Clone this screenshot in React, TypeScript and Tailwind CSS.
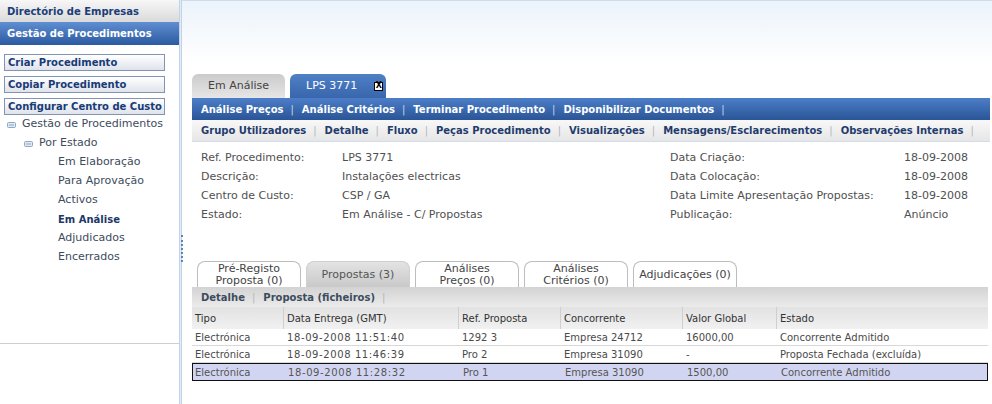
import React from 'react'

const FONT = "font-['DejaVu_Sans',sans-serif]"

const topLinks = ['Análise Preços', 'Análise Critérios', 'Terminar Procedimento', 'Disponibilizar Documentos']
const subLinks = [
  'Grupo Utilizadores',
  'Detalhe',
  'Fluxo',
  'Peças Procedimento',
  'Visualizações',
  'Mensagens/Esclarecimentos',
  'Observações Internas',
]
const estados = ['Em Elaboração', 'Para Aprovação', 'Activos', 'Em Análise', 'Adjudicados', 'Encerrados']

const leftInfo = [
  ['Ref. Procedimento:', 'LPS 3771'],
  ['Descrição:', 'Instalações electricas'],
  ['Centro de Custo:', 'CSP / GA'],
  ['Estado:', 'Em Análise - C/ Propostas'],
]
const rightInfo = [
  ['Data Criação:', '18-09-2008'],
  ['Data Colocação:', '18-09-2008'],
  ['Data Limite Apresentação Propostas:', '18-09-2008'],
  ['Publicação:', 'Anúncio'],
]

const subTabs = [
  { lines: ['Pré-Registo', 'Proposta (0)'] },
  { lines: ['Propostas (3)'], active: true },
  { lines: ['Análises', 'Preços (0)'] },
  { lines: ['Análises', 'Critérios (0)'] },
  { lines: ['Adjudicações (0)'] },
]

const headers = ['Tipo', 'Data Entrega (GMT)', 'Ref. Proposta', 'Concorrente', 'Valor Global', 'Estado']
const rows = [
  ['Electrónica', '18-09-2008 11:51:40', '1292 3', 'Empresa 24712', '16000,00', 'Concorrente Admitido'],
  ['Electrónica', '18-09-2008 11:46:39', 'Pro 2', 'Empresa 31090', '-', 'Proposta Fechada (excluída)'],
  ['Electrónica', '18-09-2008 11:28:32', 'Pro 1', 'Empresa 31090', '1500,00', 'Concorrente Admitido'],
]

const GRID = 'grid grid-cols-[92px_175px_102px_122px_94px_1fr]'

function TreeIcon() {
  return (
    <svg width="9" height="6" viewBox="0 0 9 6" className="flex-shrink-0">
      <rect x="0.5" y="0.5" width="8" height="5" rx="1" fill="#dfe8f3" stroke="#8ea8c6" />
      <line x1="2" y1="3" x2="7" y2="3" stroke="#8ea8c6" />
    </svg>
  )
}

function Sep({ light }: { light?: boolean }) {
  return <span className={`pl-[7px] pr-[8px] font-normal ${light ? 'text-[#b5b5b5]' : 'text-[#c9d6ea]'}`}>|</span>
}

export default function App() {
  return (
    <div className={`${FONT} w-[992px] h-[404px] flex bg-white overflow-hidden`}>
      {/* Sidebar */}
      <aside className="w-[179px] flex-shrink-0 flex flex-col">
        <div className="h-[22px] bg-gradient-to-b from-[#f7f7f7] to-[#dadada] px-[7px] flex items-center text-[10px] font-bold text-[#1b3d78]">
          Directório de Empresas
        </div>
        <div className="h-[23px] bg-gradient-to-b from-[#5f8ed2] to-[#2b5aa0] px-[7px] flex items-center text-[10px] font-bold text-white">
          Gestão de Procedimentos
        </div>
        <div className="pt-[9px] px-[4px] flex flex-col gap-[5px]">
          {['Criar Procedimento', 'Copiar Procedimento', 'Configurar Centro de Custo'].map((b) => (
            <div
              key={b}
              className="w-[161px] h-[17px] border border-[#8293b3] bg-gradient-to-b from-white to-[#dfe3ea] pl-[3px] flex items-center whitespace-nowrap overflow-hidden text-[10px] font-bold text-[#183b78]"
            >
              {b}
            </div>
          ))}
        </div>
        <div className="text-[11px] text-[#3d4b5c]">
          <div className="h-[19px] flex items-center gap-[6px] pl-[7px]">
            <TreeIcon />
            <span>Gestão de Procedimentos</span>
          </div>
          <div className="h-[19px] flex items-center gap-[6px] pl-[24px]">
            <TreeIcon />
            <span>Por Estado</span>
          </div>
          {estados.map((e) => (
            <div
              key={e}
              className={`h-[19px] flex items-center pl-[58px] ${e === 'Em Análise' ? 'font-bold text-[10px] text-[#1d3767]' : ''}`}
            >
              {e}
            </div>
          ))}
        </div>
        <div className="mt-[76px] border-t border-[#cfcfcf]" />
      </aside>

      {/* Divider */}
      <div className="relative w-[3px] flex-shrink-0 bg-[#e3ebf5] border-x border-[#c3d3e7]">
        <div className="absolute left-[1px] top-[235px] h-[27px] border-l-2 border-dotted border-[#5c82bd]" />
      </div>

      {/* Main */}
      <main className="flex-1 flex flex-col border-t border-[#cddcee] bg-[linear-gradient(to_bottom,#ecf3fb,#ffffff_64px)]">
        {/* Tabs */}
        <div className="pt-[73px] pl-[10px] flex items-end gap-[5px]">
          <div className="w-[93px] h-[24px] rounded-t-[6px] bg-gradient-to-b from-[#cbcbcb] to-[#e6e6e6] flex items-center justify-center text-[11px] text-[#444]">
            Em Análise
          </div>
          <div className="w-[96px] h-[24px] rounded-t-[6px] bg-gradient-to-b from-[#4f80c6] to-[#3966ad] flex items-center pl-[16px] text-[11px] text-white">
            <span>LPS 3771</span>
            <span className="ml-[17px] w-[9px] h-[9px] border border-black bg-white text-black text-[8px] font-bold leading-none flex items-center justify-center">
              X
            </span>
          </div>
        </div>

        {/* Blue bar */}
        <div className="mr-[2px] ml-[10px] h-[22px] bg-gradient-to-b from-[#4c7ec8] to-[#2a5597] flex items-center whitespace-nowrap pl-[9px] text-[10px] font-bold text-white">
          {topLinks.map((l) => (
            <React.Fragment key={l}>
              <span className="flex-shrink-0">{l}</span>
              <Sep />
            </React.Fragment>
          ))}
        </div>

        {/* Sub bar */}
        <div className="mr-[2px] ml-[10px] h-[22px] bg-gradient-to-b from-[#f8f8f8] to-[#e6e6e6] border-b border-[#d2ddea] flex items-center whitespace-nowrap overflow-hidden pl-[9px] text-[10px] font-bold text-[#1f3c6d]">
          {subLinks.map((l) => (
            <React.Fragment key={l}>
              <span className="flex-shrink-0">{l}</span>
              <Sep light />
            </React.Fragment>
          ))}
        </div>

        {/* Details */}
        <div className="ml-[10px] pl-[9px] pt-[7px] flex text-[11px] text-[#505050]">
          <div className="w-[469px] grid grid-cols-[141px_1fr] auto-rows-[19px] items-center">
            {leftInfo.map(([k, v]) => (
              <React.Fragment key={k}>
                <span>{k}</span>
                <span>{v}</span>
              </React.Fragment>
            ))}
          </div>
          <div className="grid grid-cols-[234px_1fr] auto-rows-[19px] items-center">
            {rightInfo.map(([k, v]) => (
              <React.Fragment key={k}>
                <span>{k}</span>
                <span>{v}</span>
              </React.Fragment>
            ))}
          </div>
        </div>

        {/* Sub tabs */}
        <div className="mt-[36px] ml-[15px] flex gap-[5px]">
          {subTabs.map((t) => (
            <div
              key={t.lines.join(' ')}
              className={`w-[104px] h-[26px] rounded-t-[8px] border border-b-0 flex flex-col items-center justify-center text-[11px] leading-[12px] ${
                t.active
                  ? 'bg-gradient-to-b from-[#e3e3e3] to-[#c9c9c9] border-[#cfcfcf] text-[#555]'
                  : 'bg-white border-[#bdbdbd] text-[#444]'
              }`}
            >
              {t.lines.map((l) => (
                <span key={l}>{l}</span>
              ))}
            </div>
          ))}
        </div>

        {/* Grey action bar */}
        <div className="ml-[10px] mr-[4px] h-[20px] bg-gradient-to-b from-[#d3d3d3] to-[#ebebeb] flex items-center pl-[9px] text-[10px] font-bold text-[#3c4c5e]">
          <span>Detalhe</span>
          <Sep light />
          <span>Proposta (ficheiros)</span>
          <Sep light />
        </div>

        {/* Table */}
        <div className="ml-[10px] mr-[4px] text-[10px]">
          <div className={`${GRID} h-[22px] bg-gradient-to-b from-[#e2e2e2] to-[#f1f1f1] text-[#333]`}>
            {headers.map((h, i) => (
              <div
                key={h}
                className={`flex items-center pl-[3px] ${i < headers.length - 1 ? 'border-r border-[#cfcfcf]' : ''}`}
              >
                {h}
              </div>
            ))}
          </div>
          {rows.map((r, ri) => {
            const selected = ri === 2
            return (
              <div
                key={ri}
                className={`${GRID} ${
                  selected
                    ? 'h-[18px] bg-[#d2d5f1] border border-[#111] text-[#555]'
                    : 'h-[17px] bg-white border-b border-[#d8d8d8] text-[#4a4a4a]'
                }`}
              >
                {r.map((c, ci) => (
                  <div
                    key={ci}
                    className={`flex items-center whitespace-nowrap ${selected && ci === 0 ? 'pl-[2px]' : 'pl-[3px]'} ${
                      ci === 1 ? 'tracking-[0.6px]' : ''
                    }`}
                  >
                    {c}
                  </div>
                ))}
              </div>
            )
          })}
        </div>
      </main>
    </div>
  )
}
